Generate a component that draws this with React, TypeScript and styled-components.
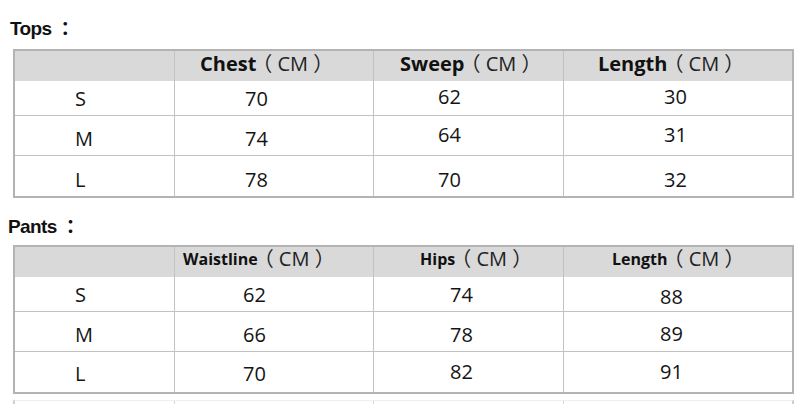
import React from "react";
import styled, { createGlobalStyle } from "styled-components";

const GlobalStyle = createGlobalStyle`
  html, body { margin: 0; padding: 0; background: #fff; }
  body { font-family: "Open Sans", "Noto Sans CJK SC", sans-serif; color: #111; }
`;

const Page = styled.div`
  width: 800px;
  height: 404px;
  overflow: hidden;
  padding-top: 15px;
  box-sizing: border-box;
`;

const Section = styled.section<{ $top: number }>`
  margin-top: ${(p) => p.$top}px;
`;

const Title = styled.h2<{ $indent: number; $gap: number }>`
  margin: 0 0 ${(p) => p.$gap}px ${(p) => p.$indent}px;
  height: 24px;
  font: bold 19px/24px "Liberation Sans", Arial, sans-serif;
  letter-spacing: -0.6px;
  color: #111;
`;

const Colon = styled.span`
  font-family: "Noto Sans CJK SC", sans-serif;
  margin-left: 9px;
`;

const Table = styled.div`
  margin-left: 13px;
  width: 781px;
  box-sizing: border-box;
  border: 2px solid #b3b3b3;
  display: grid;
  grid-template-columns: 159px 199px 190px 229px;
  grid-template-rows: 30px 34px 40px 41px;
`;

const Cell = styled.div<{ $col: number; $line?: boolean }>`
  box-sizing: border-box;
  display: flex;
  align-items: flex-end;
  border-left: ${(p) => (p.$col > 0 ? "1px solid #c2c2c2" : "none")};
  border-top: ${(p) => (p.$line ? "1px solid #c2c2c2" : "none")};
  white-space: nowrap;
`;

const HeadCell = styled(Cell)<{ $indent: number; $bottom: number }>`
  background: #d9d9d9;
  padding-left: ${(p) => p.$indent}px;
  padding-bottom: ${(p) => p.$bottom}px;
  line-height: 24px;
`;

const ValueCell = styled(Cell)<{ $indent: number; $raise: number }>`
  background: #fff;
  padding-left: ${(p) => p.$indent}px;
  padding-bottom: ${(p) => 4 + p.$raise}px;
  font-size: 20px;
  line-height: 24px;
  color: #141414;
`;

const Bold = styled.span<{ $size: number }>`
  font-weight: 700;
  font-size: ${(p) => p.$size}px;
  color: #111;
`;

const Unit = styled.span`
  font-weight: 400;
  font-size: 20px;
  color: #222;
  margin-left: -4px;
`;

const Stub = styled.div`
  margin: 6px 0 0 13px;
  width: 781px;
  height: 6px;
  box-sizing: border-box;
  border-left: 2px solid #cdcdcd;
  border-right: 2px solid #cdcdcd;
  border-top: 1px solid #eeeeee;
  display: grid;
  grid-template-columns: 159px 199px 190px 229px;
`;

const StubCell = styled.div<{ $col: number }>`
  border-left: ${(p) => (p.$col > 0 ? "1px solid #d6d6d6" : "none")};
`;

type Head = { label: string; indent: number };
type SizeTable = {
  title: string;
  titleIndent: number;
  top: number;
  gap: number;
  boldSize: number;
  headBottom: number;
  heads: Head[];
  valueIndents: number[];
  rows: string[][];
  raises: number[][];
};

const tables: SizeTable[] = [
  {
    title: "Tops",
    titleIndent: 10,
    top: 0,
    gap: 10,
    boldSize: 20,
    headBottom: 5,
    heads: [
      { label: "Chest", indent: 25 },
      { label: "Sweep", indent: 26 },
      { label: "Length", indent: 34 },
    ],
    valueIndents: [60, 70, 64, 100],
    rows: [
      ["S", "70", "62", "30"],
      ["M", "74", "64", "31"],
      ["L", "78", "70", "32"],
    ],
    raises: [
      [0, 0, 2, 2],
      [0, 0, 4, 4],
      [0, 0, 0, 0],
    ],
  },
  {
    title: "Pants",
    titleIndent: 8,
    top: 15,
    gap: 8,
    boldSize: 16,
    headBottom: 6,
    heads: [
      { label: "Waistline", indent: 8 },
      { label: "Hips", indent: 46 },
      { label: "Length", indent: 48 },
    ],
    valueIndents: [60, 68, 76, 96],
    rows: [
      ["S", "62", "74", "88"],
      ["M", "66", "78", "89"],
      ["L", "70", "82", "91"],
    ],
    raises: [
      [0, 0, 0, -2],
      [0, 0, 0, 1],
      [2, 2, 4, 4],
    ],
  },
];

function SizeChart({ t }: { t: SizeTable }) {
  return (
    <Section $top={t.top}>
      <Title $indent={t.titleIndent} $gap={t.gap}>
        {t.title}
        <Colon>：</Colon>
      </Title>
      <Table>
        <HeadCell $col={0} $indent={0} $bottom={t.headBottom} />
        {t.heads.map((h, i) => (
          <HeadCell key={h.label} $col={i + 1} $indent={h.indent} $bottom={t.headBottom}>
            <Bold $size={t.boldSize}>{h.label}</Bold>
            <Unit>（ CM ）</Unit>
          </HeadCell>
        ))}
        {t.rows.map((row, r) =>
          row.map((v, c) => (
            <ValueCell
              key={`${r}-${c}`}
              $col={c}
              $line={r > 0}
              $indent={t.valueIndents[c]}
              $raise={t.raises[r][c]}
            >
              {v}
            </ValueCell>
          ))
        )}
      </Table>
    </Section>
  );
}

export default function App() {
  return (
    <Page>
      <GlobalStyle />
      {tables.map((t) => (
        <SizeChart key={t.title} t={t} />
      ))}
      <Stub>
        {[0, 1, 2, 3].map((c) => (
          <StubCell key={c} $col={c} />
        ))}
      </Stub>
    </Page>
  );
}
